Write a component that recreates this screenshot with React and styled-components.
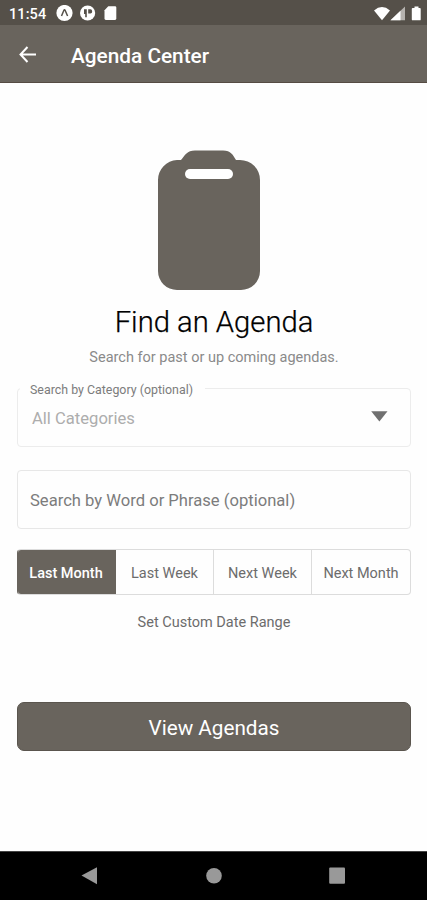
import React, { useState } from "react";
import styled, { createGlobalStyle } from "styled-components";

const RANGES = ["Last Month", "Last Week", "Next Week", "Next Month"];

const StatusBar = () => (
  <StatusRow>
    <Clock>11:54</Clock>
    <svg width="64" height="18" viewBox="0 0 64 18" fill="#fff">
      <circle cx="8.5" cy="8" r="8.1" />
      <path
        d="M5.5 11 7.9 5.3Q8.5 4.2 9.1 5.3L11.6 11"
        fill="none"
        stroke="#555049"
        strokeWidth="1.5"
      />
      <circle cx="31.6" cy="8" r="7.6" />
      <path
        d="M28 4.3h2.8v8h-1.6V9h-1.2zM32.2 4.3h2.2q1.8 0 1.8 2.1t-1.8 2.1h-2.2z"
        fill="#555049"
      />
      <path d="M52.3 1.3h6.7q1.3 0 1.3 1.3v11q0 1.3-1.3 1.3h-9.2q-1.3 0-1.3-1.3V5.2z" />
    </svg>
    <Spacer />
    <svg width="54" height="18" viewBox="0 0 54 18" fill="#fff">
      <path d="M4 5.4Q12-1.2 20 5.4L12 15.2z" />
      <path d="M20.5 15.2 35 1.5V15.2z" fill="#b5b2ae" />
      <path d="M20.5 15.2 30.5 5.7V15.2z" />
      <path d="M44.5 1.4h4v1.5h1.3q.9 0 .9.9v10.6q0 .9-.9.9h-7.1q-.9 0-.9-.9V3.8q0-.9.9-.9h1.8z" />
    </svg>
  </StatusRow>
);

const ClipboardIcon = () => (
  <svg width="104" height="141" viewBox="0 0 104 141">
    <path
      d="M20 10H24C28 5 30 .5 38 .5H66C74 .5 76 5 79 10H83A20 20 0 0 1 103 30V121A19 19 0 0 1 84 140H20A19 19 0 0 1 1 121V30A20 20 0 0 1 20 10Z"
      fill="#69645d"
    />
    <rect x="28" y="19" width="48" height="10" rx="5" fill="#fff" />
  </svg>
);

const App = () => {
  const [range, setRange] = useState(RANGES[0]);

  return (
    <Screen>
      <GlobalStyle />
      <StatusBar />
      <Header>
        <BackButton aria-label="Back">
          <svg width="20" height="20" viewBox="0 0 20 20">
            <path
              d="M9.5 3 2.5 10.5l7 7.5M2.8 10.5H18"
              fill="none"
              stroke="#fff"
              strokeWidth="2"
            />
          </svg>
        </BackButton>
        <HeaderTitle>Agenda Center</HeaderTitle>
      </Header>

      <Main>
        <Hero>
          <IconSlot>
            <ClipboardIcon />
          </IconSlot>
          <Title>Find an Agenda</Title>
          <Subtitle>Search for past or up coming agendas.</Subtitle>
        </Hero>

        <SelectBox>
          <FloatingLabel>Search by Category (optional)</FloatingLabel>
          <SelectValue>All Categories</SelectValue>
          <svg width="17" height="11" viewBox="0 0 17 11">
            <path d="M.2.2h16.3L8.4 10.6z" fill="#707070" />
          </svg>
        </SelectBox>

        <SearchInput placeholder="Search by Word or Phrase (optional)" />

        <RangeGroup>
          {RANGES.map((item) => (
            <RangeButton
              key={item}
              $active={item === range}
              onClick={() => setRange(item)}
            >
              {item}
            </RangeButton>
          ))}
        </RangeGroup>
        <CustomRange>Set Custom Date Range</CustomRange>

        <SubmitButton>View Agendas</SubmitButton>
      </Main>

      <NavBar>
        <svg width="18" height="18" viewBox="0 0 18 18">
          <path d="M.5 8.6 16 .2V17.2z" fill="#999" />
        </svg>
        <svg width="18" height="18" viewBox="0 0 18 18">
          <circle cx="9" cy="8.7" r="7.8" fill="#999" />
        </svg>
        <svg width="18" height="18" viewBox="0 0 18 18">
          <rect x="1.2" y="0.5" width="15.8" height="16.3" rx="1" fill="#999" />
        </svg>
      </NavBar>
    </Screen>
  );
};

export default App;

const GlobalStyle = createGlobalStyle`
  * {
    box-sizing: border-box;
  }

  body {
    margin: 0;
    background: #fff;
  }

  svg {
    display: block;
    flex: none;
  }

  button,
  input {
    font-family: inherit;
  }
`;

const Screen = styled.div`
  display: flex;
  flex-direction: column;
  width: 427px;
  height: 900px;
  overflow: hidden;
  background: #fefefe;
  font-family: Roboto, "Liberation Sans", sans-serif;
`;

const StatusRow = styled.div`
  display: flex;
  align-items: center;
  height: 25px;
  padding: 3px 3px 0 9px;
  background: #555049;
`;

const Clock = styled.span`
  width: 47px;
  color: #fff;
  font-size: 14.5px;
  font-weight: 500;
  letter-spacing: 0.1px;
`;

const Spacer = styled.div`
  flex: 1;
`;

const Header = styled.header`
  display: flex;
  align-items: center;
  height: 58px;
  padding: 0 18px 0 18px;
  border-bottom: 1px solid #554b43;
  background: #69645d;
`;

const BackButton = styled.button`
  width: 53px;
  padding: 0;
  border: none;
  background: none;
  cursor: pointer;
`;

const HeaderTitle = styled.h1`
  margin: 4px 0 0;
  color: #fff;
  font-size: 20.8px;
  font-weight: 500;
  line-height: 24px;
`;

const Main = styled.main`
  display: flex;
  flex: 1;
  flex-direction: column;
  padding: 67px 16px 0 17px;
`;

const Hero = styled.section`
  display: flex;
  flex-direction: column;
  align-items: center;
  height: 238px;
`;

const IconSlot = styled.div`
  padding-right: 10px;
`;

const Title = styled.h2`
  margin: 13px 0 0;
  color: #000;
  font-size: 29.2px;
  font-weight: 300;
  line-height: 36px;
  -webkit-text-stroke: 0.25px #000;
`;

const Subtitle = styled.p`
  margin: 9px 0 0;
  color: #8a8a8a;
  font-size: 14.5px;
  line-height: 18px;
`;

const SelectBox = styled.div`
  position: relative;
  display: flex;
  align-items: center;
  justify-content: space-between;
  height: 59px;
  padding: 0 22px 3px 14px;
  border: 1.5px solid #ececec;
  border-radius: 4px;
  cursor: pointer;
`;

const FloatingLabel = styled.span`
  position: absolute;
  top: -7px;
  left: 2px;
  width: 185px;
  padding-left: 10px;
  background: #fefefe;
  color: #7c7c7c;
  font-size: 12.4px;
  line-height: 16px;
`;

const SelectValue = styled.span`
  margin-top: 4px;
  color: #adadad;
  font-size: 16.6px;
`;

const SearchInput = styled.input`
  height: 59px;
  margin-top: 23px;
  padding: 1px 12px 0;
  border: 1.5px solid #e7e7e7;
  border-radius: 4px;
  outline: none;
  background: transparent;
  font-size: 16.6px;

  &::placeholder {
    color: #7c7c7c;
    opacity: 1;
  }
`;

const RangeGroup = styled.div`
  display: grid;
  grid-template-columns: 98px 98px 98px 1fr;
  height: 46px;
  margin-top: 20px;
  overflow: hidden;
  border: 1px solid #dcdcdc;
  border-left-color: ${"#69645d"};
  border-radius: 4px;
`;

const RangeButton = styled.button`
  margin: ${({ $active }) => ($active ? "-1px 0 -1px -1px" : "0")};
  padding: 2px 0 0;
  border: none;
  border-right: 1px solid ${({ $active }) => ($active ? "#69645d" : "#dcdcdc")};
  background: ${({ $active }) => ($active ? "#69645d" : "transparent")};
  color: ${({ $active }) => ($active ? "#fff" : "#6c6c6c")};
  font-size: 14.5px;
  font-weight: ${({ $active }) => ($active ? 500 : 400)};
  cursor: pointer;

  &:last-child {
    border-right: none;
  }
`;

const CustomRange = styled.button`
  align-self: center;
  height: 20px;
  margin-top: 17px;
  padding: 1px 0 0;
  border: none;
  background: none;
  color: #6c6c6c;
  font-size: 14.5px;
  line-height: 20px;
  cursor: pointer;
`;

const SubmitButton = styled.button`
  height: 49px;
  margin-top: 70px;
  padding: 2px 0 0;
  border: 1px solid #5a554e;
  border-radius: 7px;
  background: #69645d;
  color: #fff;
  font-size: 20.7px;
  cursor: pointer;
`;

const NavBar = styled.nav`
  display: flex;
  justify-content: space-between;
  height: 49px;
  padding: 15px 81px 0;
  border-top: 1px solid #444;
  background: #000;
`;
